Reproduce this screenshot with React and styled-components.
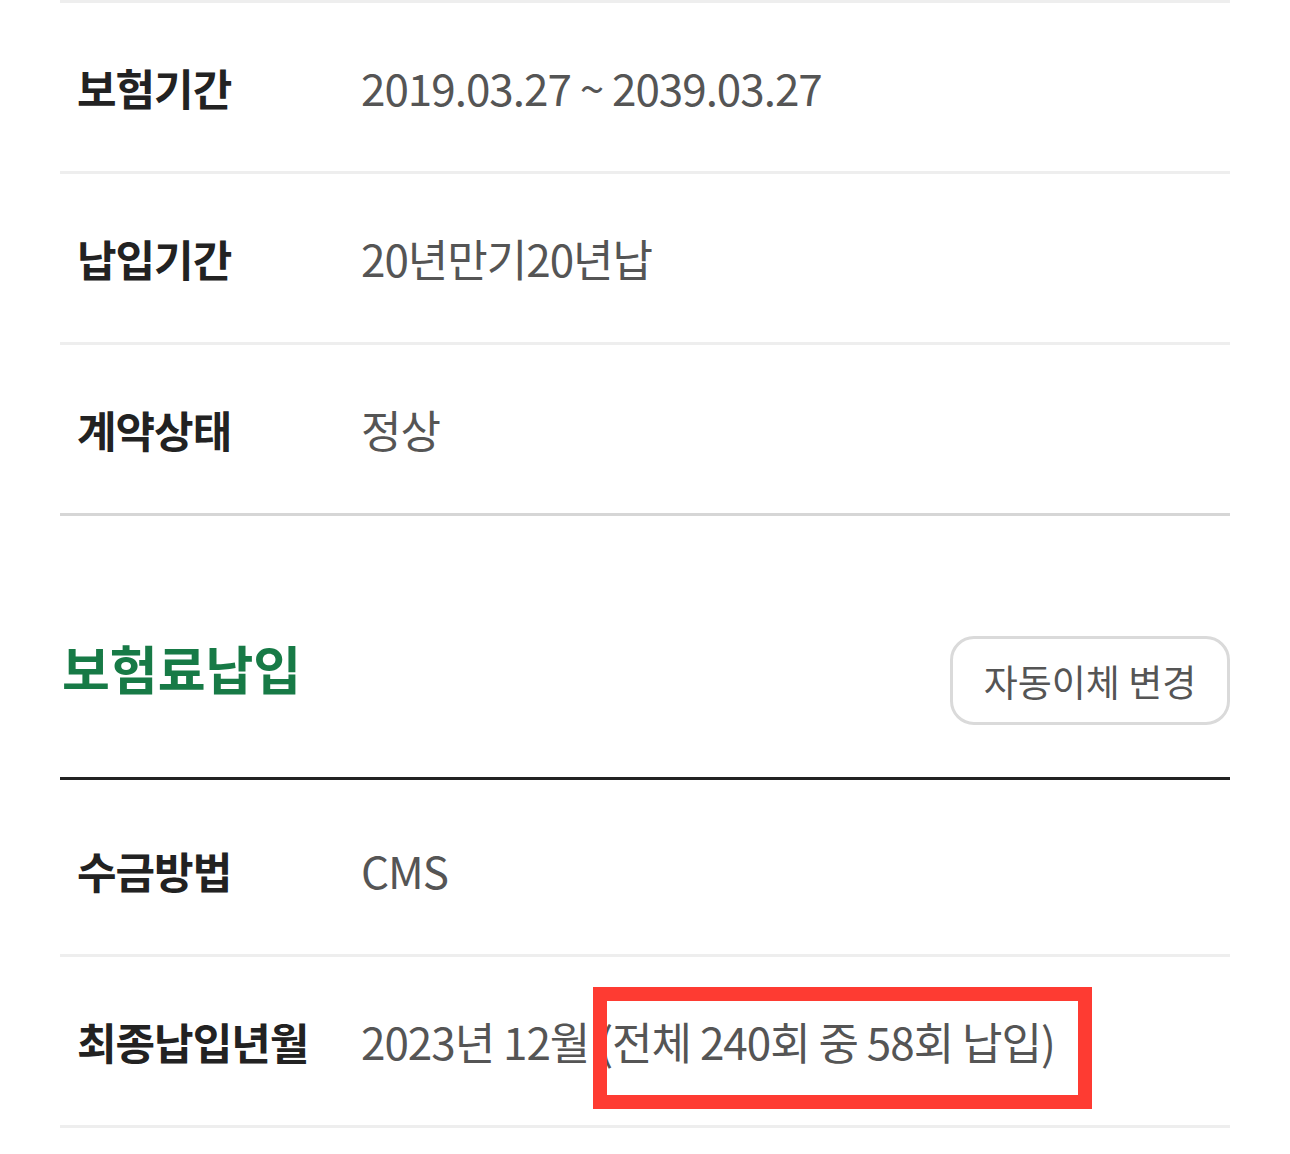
import React from 'react';
import styled, { createGlobalStyle } from 'styled-components';

const GlobalStyle = createGlobalStyle`
  html, body {
    margin: 0;
    padding: 0;
    background: #fff;
  }
  body {
    font-family: "Noto Sans CJK KR", "Noto Sans", sans-serif;
  }
`;

const Page = styled.div`
  width: 1170px;
  margin: 0 60px;
`;

const InfoTable = styled.div`
  display: flex;
  flex-direction: column;
  border-top: 3px solid ${(p) => p.$topColor || '#eeeeee'};
`;

const InfoRow = styled.div`
  display: flex;
  align-items: center;
  height: ${(p) => p.$height || 171}px;
  padding: ${(p) => p.$padTop || 0}px 17px 0;
  box-sizing: border-box;
  border-bottom: 3px solid ${(p) => (p.$strong ? '#d6d6d6' : '#eeeeee')};
`;

const Label = styled.div`
  width: 284px;
  flex-shrink: 0;
  font-size: 43px;
  font-weight: 700;
  letter-spacing: -1px;
  color: #222;
`;

const Value = styled.div`
  font-size: 44px;
  font-weight: 400;
  letter-spacing: -1px;
  color: #555;
  white-space: nowrap;
`;

const Marked = styled.span`
  position: relative;

  &::after {
    content: '';
    position: absolute;
    left: -5px;
    right: -37px;
    top: calc(50% - 54px);
    height: 122px;
    box-sizing: border-box;
    border: 14px solid #fe3b32;
  }
`;

const SectionHead = styled.div`
  display: flex;
  align-items: center;
  justify-content: space-between;
  padding: 120px 0 52px 2px;
`;

const SectionTitle = styled.h2`
  margin: 0 0 26px;
  font-size: 52px;
  line-height: 1;
  font-weight: 700;
  letter-spacing: 0;
  color: #177a46;
`;

const OutlineButton = styled.button`
  width: 280px;
  height: 89px;
  box-sizing: border-box;
  border: 3px solid #dadada;
  border-radius: 24px;
  background: #fff;
  font-family: inherit;
  font-size: 37px;
  font-weight: 400;
  letter-spacing: 0;
  color: #555;
  padding: 0;
  cursor: pointer;
`;

const contract = [
  { label: '보험기간', value: '2019.03.27 ~ 2039.03.27' },
  { label: '납입기간', value: '20년만기20년납' },
  { label: '계약상태', value: '정상' },
];

export default function App() {
  return (
    <Page>
      <GlobalStyle />
      <InfoTable>
        {contract.map((row, idx) => (
          <InfoRow key={row.label} $strong={idx === contract.length - 1}>
            <Label>{row.label}</Label>
            <Value>{row.value}</Value>
          </InfoRow>
        ))}
      </InfoTable>

      <SectionHead>
        <SectionTitle>보험료납입</SectionTitle>
        <OutlineButton type="button">자동이체 변경</OutlineButton>
      </SectionHead>

      <InfoTable $topColor="#222">
        <InfoRow $height={177} $padTop={6}>
          <Label>수금방법</Label>
          <Value>CMS</Value>
        </InfoRow>
        <InfoRow>
          <Label>최종납입년월</Label>
          <Value>
            2023년 12월 <Marked>(전체 240회 중 58회 납입)</Marked>
          </Value>
        </InfoRow>
      </InfoTable>
    </Page>
  );
}
